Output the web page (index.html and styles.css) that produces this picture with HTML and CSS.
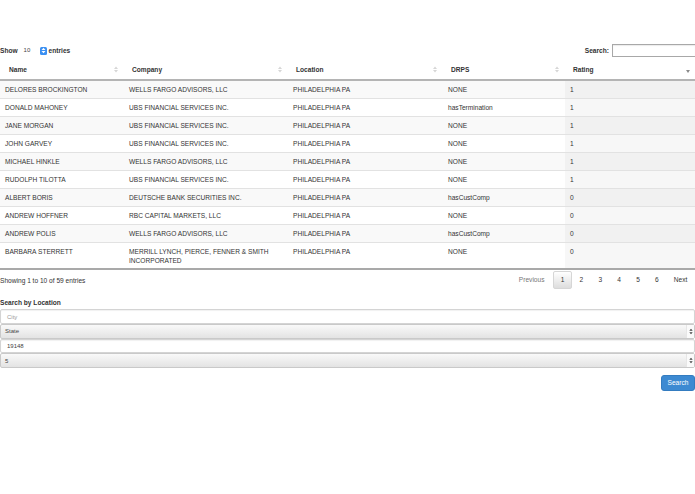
FILE: index.html
```html
<!DOCTYPE html>
<html>
<head>
<meta charset="utf-8">
<link rel="stylesheet" href="styles.css">
</head>
<body>
<div class="top">
  <div class="len">
    <span>Show</span>
    <span class="lensel">10</span>
    <span class="stepper"><svg width="5" height="7" viewBox="0 0 5 7"><path d="M0.5 3 L2.5 0.8 L4.5 3 Z M0.5 4 L2.5 6.2 L4.5 4 Z" fill="#fff"/></svg></span>
    <span>entries</span>
  </div>
  <div class="filter">
    <span>Search:</span>
    <span class="sbox"></span>
  </div>
</div>

<table class="grid">
  <colgroup>
    <col style="width:124px"><col style="width:164px"><col style="width:155px"><col style="width:122px"><col style="width:130px">
  </colgroup>
  <thead>
    <tr>
      <th>Name<svg class="sort" width="4" height="7" viewBox="0 0 4 7"><path d="M0 3 L2 0.5 L4 3 Z M0 4 L2 6.5 L4 4 Z" fill="#d6d6d6"/></svg></th>
      <th>Company<svg class="sort" width="4" height="7" viewBox="0 0 4 7"><path d="M0 3 L2 0.5 L4 3 Z M0 4 L2 6.5 L4 4 Z" fill="#d6d6d6"/></svg></th>
      <th>Location<svg class="sort" width="4" height="7" viewBox="0 0 4 7"><path d="M0 3 L2 0.5 L4 3 Z M0 4 L2 6.5 L4 4 Z" fill="#d6d6d6"/></svg></th>
      <th>DRPS<svg class="sort" width="4" height="7" viewBox="0 0 4 7"><path d="M0 3 L2 0.5 L4 3 Z M0 4 L2 6.5 L4 4 Z" fill="#d6d6d6"/></svg></th>
      <th>Rating<svg class="sort desc" width="4" height="7" viewBox="0 0 4 7"><path d="M0 3 L2 6 L4 3 Z" fill="#8a8a8a"/></svg></th>
    </tr>
  </thead>
  <tbody>
    <tr class="odd"><td>DELORES BROCKINGTON</td><td>WELLS FARGO ADVISORS, LLC</td><td>PHILADELPHIA PA</td><td>NONE</td><td class="sorted">1</td></tr>
    <tr class="even"><td>DONALD MAHONEY</td><td>UBS FINANCIAL SERVICES INC.</td><td>PHILADELPHIA PA</td><td>hasTermination</td><td class="sorted">1</td></tr>
    <tr class="odd"><td>JANE MORGAN</td><td>UBS FINANCIAL SERVICES INC.</td><td>PHILADELPHIA PA</td><td>NONE</td><td class="sorted">1</td></tr>
    <tr class="even"><td>JOHN GARVEY</td><td>UBS FINANCIAL SERVICES INC.</td><td>PHILADELPHIA PA</td><td>NONE</td><td class="sorted">1</td></tr>
    <tr class="odd"><td>MICHAEL HINKLE</td><td>WELLS FARGO ADVISORS, LLC</td><td>PHILADELPHIA PA</td><td>NONE</td><td class="sorted">1</td></tr>
    <tr class="even"><td>RUDOLPH TILOTTA</td><td>UBS FINANCIAL SERVICES INC.</td><td>PHILADELPHIA PA</td><td>NONE</td><td class="sorted">1</td></tr>
    <tr class="odd"><td>ALBERT BORIS</td><td>DEUTSCHE BANK SECURITIES INC.</td><td>PHILADELPHIA PA</td><td>hasCustComp</td><td class="sorted">0</td></tr>
    <tr class="even"><td>ANDREW HOFFNER</td><td>RBC CAPITAL MARKETS, LLC</td><td>PHILADELPHIA PA</td><td>NONE</td><td class="sorted">0</td></tr>
    <tr class="odd"><td>ANDREW POLIS</td><td>WELLS FARGO ADVISORS, LLC</td><td>PHILADELPHIA PA</td><td>hasCustComp</td><td class="sorted">0</td></tr>
    <tr class="even"><td>BARBARA STERRETT</td><td>MERRILL LYNCH, PIERCE, FENNER &amp; SMITH INCORPORATED</td><td>PHILADELPHIA PA</td><td>NONE</td><td class="sorted">0</td></tr>
  </tbody>
</table>

<div class="foot">
  <div class="info">Showing 1 to 10 of 59 entries</div>
  <div class="pg">
    <span class="pb disabled">Previous</span>
    <span class="pb current">1</span>
    <span class="pb">2</span>
    <span class="pb">3</span>
    <span class="pb">4</span>
    <span class="pb">5</span>
    <span class="pb">6</span>
    <span class="pb">Next</span>
  </div>
</div>

<div class="locsearch">
  <div class="loctitle">Search by Location</div>
  <div class="field input placeholder">City</div>
  <div class="field select"><span>State</span><span class="arrows"><svg width="4" height="7" viewBox="0 0 4 7"><path d="M0.3 2.8 L2 0.8 L3.7 2.8 Z M0.3 4.2 L2 6.2 L3.7 4.2 Z" fill="#444"/></svg></span></div>
  <div class="field input">19148</div>
  <div class="field select"><span>5</span><span class="arrows"><svg width="4" height="7" viewBox="0 0 4 7"><path d="M0.3 2.8 L2 0.8 L3.7 2.8 Z M0.3 4.2 L2 6.2 L3.7 4.2 Z" fill="#444"/></svg></span></div>
  <div class="actions"><span class="btn">Search</span></div>
</div>
</body>
</html>
```

FILE: styles.css
```css
html, body {
  margin: 0;
  padding: 0;
  background: #fff;
}
body {
  font-family: "Liberation Sans", Arial, Helvetica, sans-serif;
  font-size: 6.6px;
  line-height: 9px;
  color: #333;
}

.top {
  display: flex;
  justify-content: space-between;
  align-items: center;
  padding-top: 44px;
  height: 13px;
  margin-bottom: 4px;
}
.len {
  display: flex;
  align-items: center;
  font-weight: bold;
}
.lensel {
  font-weight: normal;
  width: 14px;
  padding-left: 4px;
  font-size: 6px;
  color: #444;
  margin-left: 2px;
}
.stepper {
  display: inline-flex;
  align-items: center;
  justify-content: center;
  width: 7px;
  height: 8px;
  background: #3a8ff2;
  border-radius: 1.5px;
  margin: 0 2px 0 2px;
}
.filter {
  display: flex;
  align-items: center;
  font-weight: bold;
}
.sbox {
  display: block;
  width: 82px;
  height: 11px;
  margin-left: 3px;
  border: 1px solid #a8a8a8;
  border-right: none;
  box-shadow: inset 0 1px 1px rgba(0,0,0,0.08);
  background: #fff;
}

.grid {
  width: 100%;
  border-collapse: collapse;
  table-layout: fixed;
}
.grid th {
  text-align: left;
  font-weight: bold;
  padding: 4px 6px 5px 8px;
  border-bottom: 2px solid #b4b4b4;
  white-space: nowrap;
}
.grid th:first-child {
  padding-left: 9px;
}
.sort {
  float: right;
  margin-top: 1px;
}
.sort.desc {
  margin-right: -1px;
  margin-top: 2px;
}
.grid td {
  padding: 4px 5px;
  border-top: 1px solid #e2e2e2;
  vertical-align: top;
}
.grid tbody tr:first-child td {
  border-top: none;
}
.grid tbody tr:last-child td {
  padding-bottom: 3px;
  border-bottom: 2px solid #a9a9a9;
}
.grid tr.odd td {
  background: #f9f9f9;
}
.grid tr.odd td.sorted {
  background: #f1f1f1;
}
.grid tr.even td.sorted {
  background: #f7f7f7;
}

.foot {
  display: flex;
  justify-content: space-between;
  align-items: center;
  padding-top: 1px;
}
.info {
  color: #333;
}
.pg {
  display: flex;
  align-items: center;
}
.pb {
  padding: 3px 6.6px 4px;
  border: 1px solid transparent;
  border-radius: 2px;
  color: #333;
}
.pb.disabled {
  color: #777;
  margin-right: 1px;
}
.pb.current {
  border-color: #d6d6d6;
  background: linear-gradient(#ffffff, #dddddd);
}

.locsearch {
  margin-top: 9px;
}
.loctitle {
  font-weight: bold;
  margin-bottom: 2px;
}
.field {
  box-sizing: border-box;
  height: 14.75px;
  border: 1px solid #d4d4d4;
  border-radius: 2px;
  font-size: 6px;
  padding: 2.5px 6px 0;
  color: #444;
}
.field.input {
  background: #fff;
  box-shadow: inset 0 1px 1px rgba(0,0,0,0.06);
}
.field.placeholder {
  color: #999;
}
.field.select {
  display: flex;
  justify-content: space-between;
  align-items: stretch;
  padding: 0 0 0 4px;
  background: linear-gradient(#f9f9f9, #e3e3e3);
  border-color: #c9c9c9;
}
.field.select > span:first-child {
  padding-top: 2.5px;
}
.arrows {
  display: flex;
  align-items: center;
  justify-content: center;
  width: 7px;
  background: #fafafa;
  border-left: 1px solid #e6e6e6;
}
.actions {
  display: flex;
  justify-content: flex-end;
  margin-top: 7px;
}
.btn {
  display: block;
  width: 34px;
  height: 16px;
  box-sizing: border-box;
  line-height: 14px;
  text-align: center;
  color: #fff;
  background: #3d8ad2;
  border: 1px solid #347cc0;
  border-radius: 3px;
}
```
